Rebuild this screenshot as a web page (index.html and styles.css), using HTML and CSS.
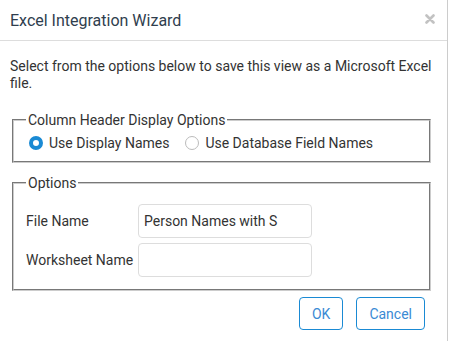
FILE: index.html
```html
<!DOCTYPE html>
<html lang="en">
<head>
    <meta charset="UTF-8">
    <meta name="viewport" content="width=device-width, initial-scale=1.0">
    <title>Excel Integration Wizard</title>
    <link rel="stylesheet" href="styles.css">
</head>
<body>
    <div class="dialog">
        <div class="dialog-header">
            <span class="dialog-title">Excel Integration Wizard</span>
            <svg class="close-btn" width="10" height="10" viewBox="0 0 10 10">
                <path d="M1.5 1.5 L8.5 8.5 M8.5 1.5 L1.5 8.5" stroke="#c2c2c2" stroke-width="2.6" stroke-linecap="round"/>
            </svg>
        </div>
        <div class="dialog-body">
            <p class="intro">Select from the options below to save this view as a Microsoft Excel file.</p>

            <fieldset class="group">
                <legend>Column Header Display Options</legend>
                <div class="radio-row">
                    <label class="radio"><input type="radio" name="header" checked><span class="dot"></span>Use Display Names</label>
                    <label class="radio"><input type="radio" name="header"><span class="dot"></span>Use Database Field Names</label>
                </div>
            </fieldset>

            <fieldset class="group options">
                <legend>Options</legend>
                <div class="field">
                    <label for="fileName">File Name</label>
                    <input type="text" id="fileName" class="text-input" value="Person Names with S">
                </div>
                <div class="field">
                    <label for="sheetName">Worksheet Name</label>
                    <input type="text" id="sheetName" class="text-input">
                </div>
            </fieldset>

            <div class="actions">
                <button class="btn">OK</button>
                <button class="btn">Cancel</button>
            </div>
        </div>
    </div>
</body>
</html>
```

FILE: styles.css
```css
body {
    margin: 0;
    font-family: Roboto, "Liberation Sans", sans-serif;
    color: #333;
    background: #fff;
}
.dialog {
    width: 447px;
    height: 341px;
    border-right: 1px solid #ccc;
}
.dialog-header {
    height: 40px;
    display: flex;
    align-items: center;
    justify-content: space-between;
    padding: 0 12px 0 10px;
    border-bottom: 1px solid #ddd;
}
.dialog-title {
    font-size: 16px;
    color: #2f3e4e;
}
.close-btn {
    display: block;
    margin-top: -2px;
}
.dialog-body {
    padding: 17px 0 0 0;
    font-size: 14px;
}
.intro {
    margin: 0 10px 20px 10px;
    line-height: 17px;
}
.group {
    width: 391px;
    margin: 0 0 0 12px;
    border: 2px groove #ccc;
    padding: 4px 12px 10px 12px;
}
.group legend {
    padding: 0 2px;
}
.radio-row {
    display: flex;
    gap: 16px;
    padding: 3px 0 0 3px;
}
.radio {
    display: flex;
    align-items: center;
    gap: 6px;
}
.radio input {
    display: none;
}
.dot {
    width: 14px;
    height: 14px;
    border: 1px solid #bbb;
    border-radius: 50%;
    box-sizing: border-box;
}
.radio input:checked + .dot {
    border: 4px solid #1a8ad4;
}
.options {
    margin-top: 12px;
    padding: 13px 12px 12px 12px;
}
.field {
    display: flex;
    align-items: center;
    margin-bottom: 5px;
}
.field:last-child {
    margin-bottom: 0;
}
.field label {
    width: 112px;
}
.text-input {
    width: 174px;
    height: 34px;
    box-sizing: border-box;
    border: 1px solid #ddd;
    border-radius: 4px;
    padding: 0 5px;
    font: inherit;
    color: #333;
}
.actions {
    display: flex;
    justify-content: flex-end;
    gap: 13px;
    padding: 6px 22px 0 0;
}
.btn {
    height: 33px;
    padding: 0 12px;
    background: #fff;
    border: 1px solid #1a8ad4;
    border-radius: 4px;
    color: #3a8ad4;
    font: inherit;
}
```
